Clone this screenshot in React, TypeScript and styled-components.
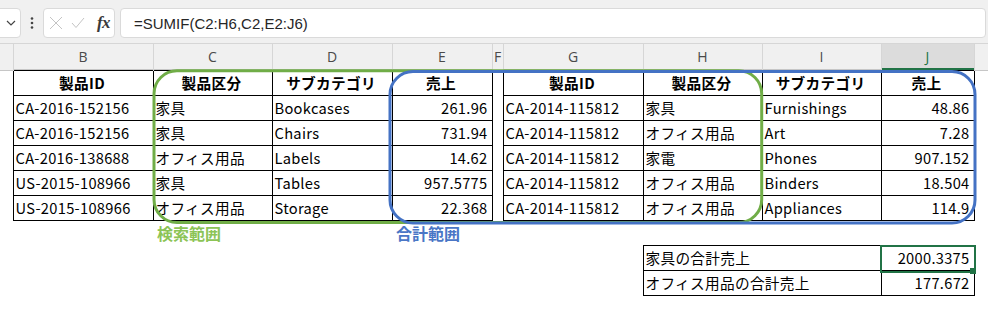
import React from 'react';
import styled, { createGlobalStyle } from 'styled-components';

const GlobalStyle = createGlobalStyle`
  html, body { margin: 0; padding: 0; background: #ffffff; }
  body { width: 988px; height: 311px; overflow: hidden; font-family: "Noto Sans CJK JP", "Noto Sans", sans-serif; }
`;

const Page = styled.div`
  width: 988px;
  height: 311px;
  overflow: hidden;
  background: #ffffff;
`;

const FormulaBar = styled.div`
  height: 43px;
  box-sizing: border-box;
  background: #f0f0f0;
  display: flex;
  align-items: flex-start;
  padding-top: 8px;
`;

const NameBox = styled.div`
  margin-left: -10px;
  width: 31px;
  height: 30px;
  box-sizing: border-box;
  background: #ffffff;
  border: 1px solid #dadada;
  border-radius: 4px;
  display: flex;
  align-items: center;
  justify-content: flex-end;
  padding-right: 4px;
`;

const Grip = styled.div`
  width: 22px;
  height: 30px;
  display: flex;
  align-items: center;
  justify-content: center;
`;

const FuncBox = styled.div`
  width: 72px;
  height: 30px;
  box-sizing: border-box;
  background: #ffffff;
  border: 1px solid #dadada;
  border-radius: 4px;
  display: grid;
  grid-template-columns: 22px 22px 1fr;
  align-items: center;
  justify-items: center;
  padding-left: 1px;
`;

const Fx = styled.span`
  font-family: "Liberation Serif", "DejaVu Serif", serif;
  font-style: italic;
  font-weight: 700;
  font-size: 17px;
  color: #3a3a3a;
  padding-left: 4px;
  letter-spacing: -0.5px;
`;

const FormulaInput = styled.div`
  flex: 1;
  margin-left: 5px;
  margin-right: 2px;
  height: 30px;
  box-sizing: border-box;
  background: #ffffff;
  border: 1px solid #dadada;
  border-radius: 4px;
  display: flex;
  align-items: center;
  padding-left: 13px;
  font-family: "Liberation Sans", Arial, sans-serif;
  font-size: 15px;
  color: #262626;
`;

const SheetArea = styled.div`
  position: relative;
`;

const Sheet = styled.table`
  border-collapse: collapse;
  table-layout: fixed;
  width: 988px;
  font-family: "Noto Sans CJK JP", "Noto Sans", sans-serif;
  font-size: 14.67px;
  color: #000000;
`;

const HeadRow = styled.tr`
  height: 27px;
`;

const Row = styled.tr`
  height: 25px;
`;

const ColHead = styled.th<{ $selected?: boolean }>`
  padding: 0;
  background: ${(p) => (p.$selected ? '#dcdcdc' : '#f0f0f0')};
  border-top: 1px solid #d6d6d6;
  border-right: 1px solid #d6d6d6;
  border-left: none;
  border-bottom: none;
  box-shadow: ${(p) => (p.$selected ? 'inset 0 -2px 0 #217346' : 'inset 0 -1px 0 #c6c6c6')};
  font-family: "Open Sans", "Liberation Sans", sans-serif;
  font-weight: 400;
  font-size: 14px;
  color: ${(p) => (p.$selected ? '#217346' : '#4a4a4a')};
  text-align: center;
  vertical-align: middle;
  line-height: 1;
`;

const Cell = styled.td<{ $boxed?: boolean; $align?: 'left' | 'center' | 'right'; $bold?: boolean }>`
  padding: 0 4px 0 2px;
  border: ${(p) => (p.$boxed ? '1px solid #000000' : 'none')};
  text-align: ${(p) => p.$align ?? 'left'};
  font-weight: ${(p) => (p.$bold ? 700 : 400)};
  letter-spacing: 0.3px;
  white-space: nowrap;
  overflow: hidden;
  line-height: 1;
  vertical-align: middle;
`;

const RangeLabel = styled.span<{ $tone: 'search' | 'sum' }>`
  color: ${(p) => (p.$tone === 'search' ? '#8cc456' : '#4a76c6')};
  font-weight: 700;
  font-size: 16px;
  letter-spacing: 0;
  padding-left: 2px;
`;

const RangeOverlay = styled.svg`
  position: absolute;
  left: 0;
  top: 0;
  pointer-events: none;
`;

const Selection = styled.div`
  position: absolute;
  left: 880px;
  top: 202px;
  width: 96px;
  height: 28px;
  box-sizing: border-box;
  border: 2px solid #217346;
  pointer-events: none;
`;

const FillHandle = styled.div`
  position: absolute;
  right: -2px;
  bottom: -3px;
  width: 6px;
  height: 6px;
  background: #217346;
`;

const colWidths = [13, 140, 119, 120, 100, 11, 140, 119, 119, 93, 14];
const letters = ['', 'B', 'C', 'D', 'E', 'F', 'G', 'H', 'I', 'J', ''];
const heads = ['製品ID', '製品区分', 'サブカテゴリ', '売上'];

const left = [
  ['CA-2016-152156', '家具', 'Bookcases', '261.96'],
  ['CA-2016-152156', '家具', 'Chairs', '731.94'],
  ['CA-2016-138688', 'オフィス用品', 'Labels', '14.62'],
  ['US-2015-108966', '家具', 'Tables', '957.5775'],
  ['US-2015-108966', 'オフィス用品', 'Storage', '22.368'],
];

const right = [
  ['CA-2014-115812', '家具', 'Furnishings', '48.86'],
  ['CA-2014-115812', 'オフィス用品', 'Art', '7.28'],
  ['CA-2014-115812', '家電', 'Phones', '907.152'],
  ['CA-2014-115812', 'オフィス用品', 'Binders', '18.504'],
  ['CA-2014-115812', 'オフィス用品', 'Appliances', '114.9'],
];

const summary = [
  ['家具の合計売上', '2000.3375'],
  ['オフィス用品の合計売上', '177.672'],
];

const DataBlock: React.FC<{ row: string[] }> = ({ row }) => (
  <>
    <Cell $boxed>{row[0]}</Cell>
    <Cell $boxed>{row[1]}</Cell>
    <Cell $boxed>{row[2]}</Cell>
    <Cell $boxed $align="right">{row[3]}</Cell>
  </>
);

export default function App() {
  return (
    <Page>
      <GlobalStyle />
      <FormulaBar>
        <NameBox>
          <svg width="10" height="6" viewBox="0 0 10 6">
            <path d="M1 1 L5 5 L9 1" fill="none" stroke="#444" strokeWidth="1.2" />
          </svg>
        </NameBox>
        <Grip>
          <svg width="4" height="12" viewBox="0 0 4 12">
            <circle cx="2" cy="1.5" r="1.3" fill="#444" />
            <circle cx="2" cy="6" r="1.3" fill="#444" />
            <circle cx="2" cy="10.5" r="1.3" fill="#444" />
          </svg>
        </Grip>
        <FuncBox>
          <svg width="14" height="14" viewBox="0 0 14 14">
            <path d="M1 1 L13 13 M13 1 L1 13" stroke="#c4c4c4" strokeWidth="1" fill="none" />
          </svg>
          <svg width="14" height="12" viewBox="0 0 14 12">
            <path d="M1 6 L5 10.5 L13 1" stroke="#c4c4c4" strokeWidth="1" fill="none" />
          </svg>
          <Fx>fx</Fx>
        </FuncBox>
        <FormulaInput>=SUMIF(C2:H6,C2,E2:J6)</FormulaInput>
      </FormulaBar>
      <SheetArea>
        <Sheet>
          <colgroup>
            {colWidths.map((w, i) => (
              <col key={i} style={{ width: w }} />
            ))}
          </colgroup>
          <thead>
            <HeadRow>
              {letters.map((l, i) => (
                <ColHead key={i} $selected={l === 'J'}>
                  {l}
                </ColHead>
              ))}
            </HeadRow>
          </thead>
          <tbody>
            <Row>
              <Cell />
              {heads.map((h) => (
                <Cell key={'l' + h} $boxed $bold $align="center">{h}</Cell>
              ))}
              <Cell />
              {heads.map((h) => (
                <Cell key={'r' + h} $boxed $bold $align="center">{h}</Cell>
              ))}
              <Cell />
            </Row>
            {left.map((row, i) => (
              <Row key={i}>
                <Cell />
                <DataBlock row={row} />
                <Cell />
                <DataBlock row={right[i]} />
                <Cell />
              </Row>
            ))}
            <Row>
              <Cell />
              <Cell />
              <Cell><RangeLabel $tone="search">検索範囲</RangeLabel></Cell>
              <Cell />
              <Cell><RangeLabel $tone="sum">合計範囲</RangeLabel></Cell>
              <Cell />
              <Cell />
              <Cell />
              <Cell />
              <Cell />
              <Cell />
            </Row>
            {summary.map(([label, value]) => (
              <Row key={label}>
                <Cell />
                <Cell />
                <Cell />
                <Cell />
                <Cell />
                <Cell />
                <Cell />
                <Cell $boxed colSpan={2}>{label}</Cell>
                <Cell $boxed $align="right">{value}</Cell>
                <Cell />
              </Row>
            ))}
            <Row>
              {colWidths.map((_, i) => (
                <Cell key={i} />
              ))}
            </Row>
          </tbody>
        </Sheet>
        <RangeOverlay width="988" height="268" viewBox="0 0 988 268">
          <rect x="154" y="27.7" width="607.7" height="151.8" rx="23" fill="none" stroke="#70ad47" strokeWidth="3" />
          <rect x="390" y="28.5" width="585" height="151.5" rx="23" fill="none" stroke="#4472c4" strokeWidth="3" />
        </RangeOverlay>
        <Selection>
          <FillHandle />
        </Selection>
      </SheetArea>
    </Page>
  );
}
